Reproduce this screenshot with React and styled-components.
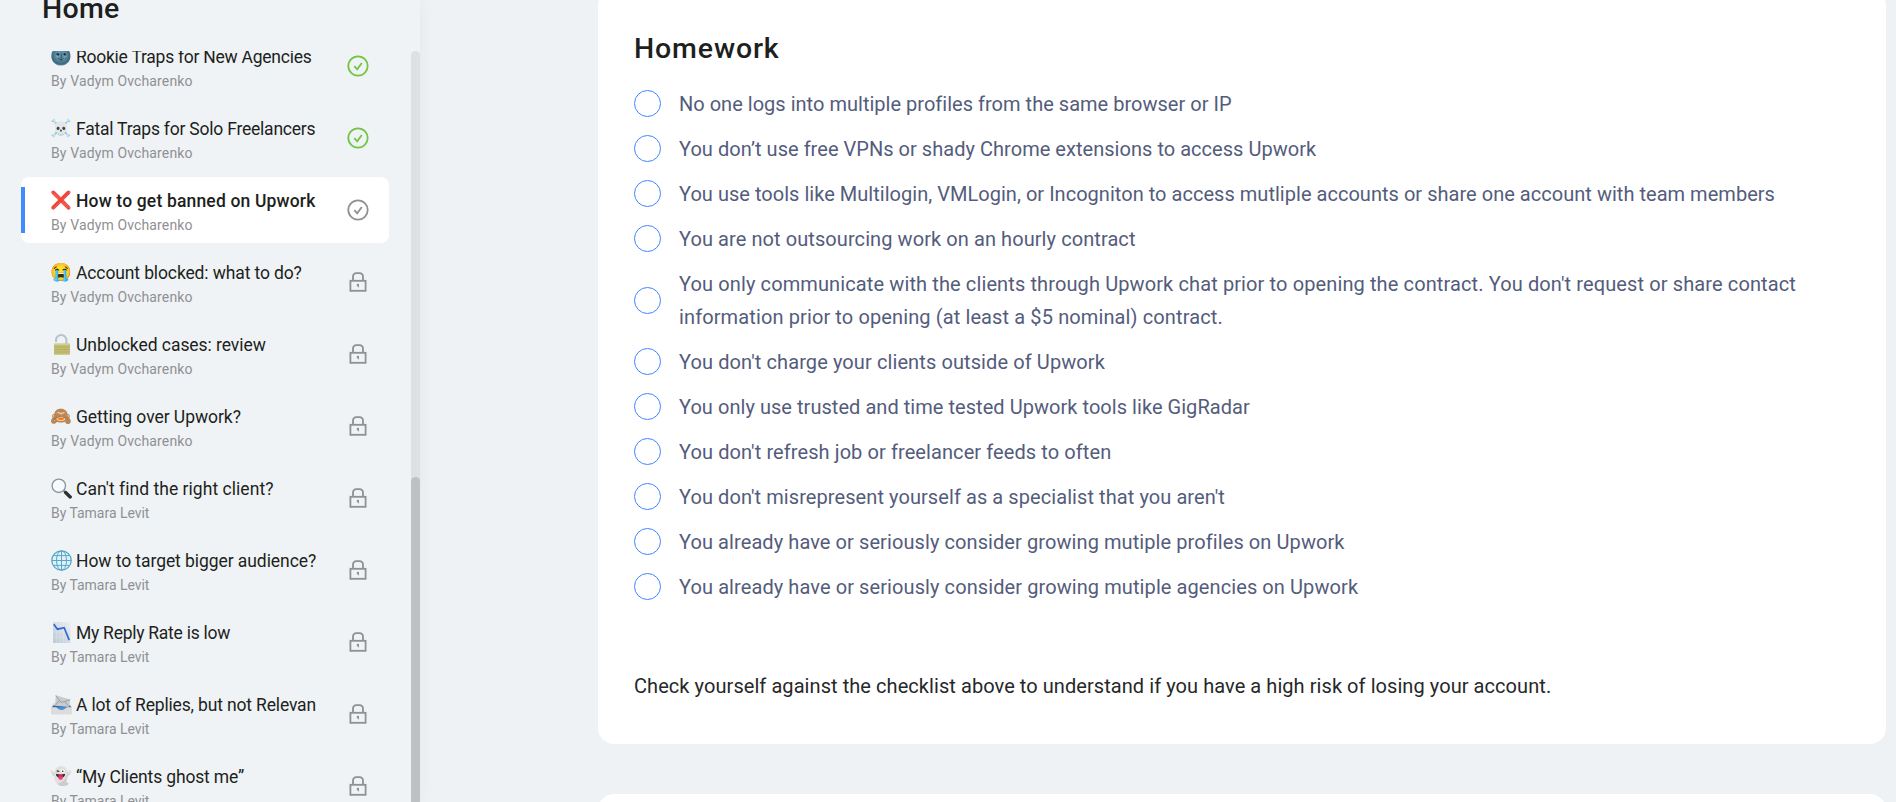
import React, { useState } from 'react'
import styled, { createGlobalStyle } from 'styled-components'

const GlobalStyle = createGlobalStyle`
  * { box-sizing: border-box; }
  html, body {
    margin: 0;
    height: 100%;
    overflow: hidden;
  }
  body {
    background: #eef2f5;
    font-family: Roboto, Inter, "Liberation Sans", sans-serif;
    color: #1d1f20;
  }
`

const Page = styled.div`
  display: flex;
  height: 802px;
  overflow: hidden;
`

const Sidebar = styled.aside`
  width: 420px;
  flex: none;
  display: flex;
  flex-direction: column;
  background: #eff3f6;
  box-shadow: 0 0 14px rgba(60, 70, 90, 0.06);
`

const SidebarTitle = styled.div`
  height: 51px;
  flex: none;
  padding-left: 42px;
  font-size: 28.5px;
  line-height: 18px;
  font-weight: 500;
  letter-spacing: 0.3px;
`

const Scroll = styled.div`
  flex: 1;
  min-height: 0;
  display: flex;
  overflow: hidden;
`

const Lessons = styled.div`
  width: 411px;
  flex: none;
  margin-top: -18px;
  padding: 0 22px 0 21px;
  display: flex;
  flex-direction: column;
  gap: 6px;
`

const Track = styled.div`
  width: 9px;
  flex: none;
  padding-top: 426px;
  border-radius: 5px 5px 0 0;
  background: #dfe0e3;
`

const Thumb = styled.div`
  height: 400px;
  border-radius: 5px;
  background: #bfc0c3;
`

const Lesson = styled.div`
  height: 66px;
  flex: none;
  display: flex;
  align-items: center;
  padding-right: 20px;
  border-radius: 8px;
  background: ${(p) => (p.$active ? '#fff' : 'transparent')};
`

const Marker = styled.div`
  width: 4px;
  height: 46px;
  flex: none;
  margin-right: 26px;
  background: ${(p) => (p.$active ? '#3f8cff' : 'transparent')};
`

const LessonText = styled.div`
  flex: 1;
  min-width: 0;
  padding-top: 5px;
  white-space: nowrap;
`

const LessonTitle = styled.div`
  display: flex;
  align-items: center;
  gap: 4px;
  font-size: 17.5px;
  line-height: 24px;
  font-weight: ${(p) => (p.$active ? 500 : 400)};
  letter-spacing: ${(p) => p.$ls}px;
`

const Author = styled.div`
  font-size: 14px;
  line-height: 24px;
  color: #8f9092;
  letter-spacing: ${(p) => p.$ls}px;
`

const Emoji = styled.span`
  width: 21px;
  height: 21px;
  flex: none;
  display: flex;
  align-items: center;
  justify-content: center;
  font-family: "Noto Color Emoji", sans-serif;
  font-size: 17.5px;
  line-height: 21px;
  letter-spacing: 0;
`

const Status = styled.span`
  width: 22px;
  height: 24px;
  flex: none;
  display: flex;
  align-items: center;
  justify-content: center;
  color: ${(p) => (p.$done ? '#73c541' : '#8f9092')};
`

const Main = styled.main`
  flex: 1;
  min-width: 0;
  display: flex;
  flex-direction: column;
  gap: 50px;
  margin-top: -10px;
  padding: 0 10px 0 178px;
`

const Card = styled.section`
  height: 754px;
  flex: none;
  padding: 40px 36px;
  border-radius: 16px;
  background: #fff;
`

const Heading = styled.h2`
  margin: 0 0 19px;
  font-size: 28.5px;
  line-height: 38px;
  font-weight: 500;
  letter-spacing: 0.85px;
`

const Checklist = styled.div`
  display: flex;
  flex-direction: column;
  gap: 12px;
`

const Task = styled.label`
  display: flex;
  align-items: center;
  gap: 18px;
  font-size: 20px;
  line-height: 33px;
  color: #545c7c;
  letter-spacing: ${(p) => p.$ls}px;
  cursor: pointer;
`

const TaskText = styled.span`
  margin: 1px 0 -1px;
`

const Radio = styled.span`
  width: 27px;
  height: 27px;
  flex: none;
  border: 1px solid #3f85ff;
  border-radius: 50%;
  background: ${(p) => (p.$checked ? '#3f85ff' : 'transparent')};
`

const Note = styled.p`
  margin: 67px 0 0;
  font-size: 20px;
  line-height: 33px;
  letter-spacing: 0.065px;
  color: #262829;
`

const CheckIcon = () => (
  <svg width="22" height="22" viewBox="0 0 22 22" fill="none" stroke="currentColor" strokeWidth="1.8">
    <circle cx="11" cy="11" r="9.7" />
    <path d="M7.3 11.2l2.9 3.2 4.6-6.4" />
  </svg>
)

const LockIcon = () => (
  <svg width="18" height="20" viewBox="0 0 18 20" fill="none" stroke="currentColor" strokeWidth="1.8">
    <rect x="1.4" y="8.8" width="15.2" height="10" />
    <path d="M4 8.6V4.4A3.3 3.3 0 0 1 7.3 1.1h3.4A3.3 3.3 0 0 1 14 4.4v4.2" />
    <circle cx="8.9" cy="13" r="1.2" fill="currentColor" stroke="none" />
    <path d="M9.4 13v2.2" strokeWidth="1.2" />
  </svg>
)

const OpenLock = () => (
  <svg width="21" height="21" viewBox="0 0 21 21" fill="none">
    <path d="M5 8V6.2a5 5 0 0 1 10.4 0V10" stroke="#b4c3cf" strokeWidth="2" />
    <rect x="3" y="9.5" width="16" height="11.3" rx="1" fill="#c3bd73" />
    <path d="M3.5 13h15M3.5 15.5h15M3.5 18h15" stroke="#b0aa60" strokeWidth=".7" />
    <path d="M3.5 10.3h15" stroke="#d9d59c" />
  </svg>
)

const Magnifier = () => (
  <svg width="21" height="21" viewBox="0 0 21 21" fill="none">
    <path d="M12.6 12.6l2.4 2.2" stroke="#8a8f94" strokeWidth="2" />
    <path d="M14.6 14.6l4.6 4.3" stroke="#2d3033" strokeWidth="3.4" strokeLinecap="round" />
    <circle cx="7.8" cy="7.8" r="6.7" fill="#f6fafc" stroke="#8b949c" strokeWidth="1.3" />
    <path d="M3.8 7.6a4 4 0 0 1 3.6-3.8" stroke="#fff" strokeWidth="1.4" />
  </svg>
)

const Globe = () => (
  <svg width="21" height="21" viewBox="0 0 21 21" fill="none" stroke="#58a6c8" strokeWidth="1">
    <circle cx="10.5" cy="10.5" r="9.7" fill="#dff2fa" strokeWidth="1.3" />
    <ellipse cx="10.5" cy="10.5" rx="5" ry="9.7" />
    <path d="M10.5 .8v19.4M.8 10.5h19.4M2.4 5.6h16.2M2.4 15.4h16.2" />
  </svg>
)

const Chart = () => (
  <svg width="21" height="21" viewBox="0 0 21 21" fill="none">
    <defs>
      <linearGradient id="paper" x1="1" y1="0" x2="0" y2="1">
        <stop offset="0" stopColor="#e9eef3" />
        <stop offset="1" stopColor="#bcc8d6" />
      </linearGradient>
    </defs>
    <rect x="2" y="0" width="17.5" height="21" fill="url(#paper)" />
    <path d="M5.5 0v21M9 0v21M12.5 0v21M16 0v21M2 5h17.5M2 10h17.5M2 15h17.5" stroke="#fff" strokeOpacity=".35" strokeWidth=".6" />
    <path d="M2.8 2.2l3.6 5 6.8-1.5 5 12.4" stroke="#3467cf" strokeWidth="1.7" />
  </svg>
)

const Tray = () => (
  <svg width="21" height="21" viewBox="0 0 21 21" fill="none">
    <path d="M2.5 9h16l2.3 4v6.8H.2V13z" fill="#dcdcda" />
    <path d="M2.2 11.5h16.8l1.4 2.3H.8z" fill="#2966ad" />
    <path d="M4.8 1.2l14.4 4.4-1.2 7.4-14-1.3z" fill="#c9cbcc" />
    <path d="M4.8 1.4l5.3 7.1 9-2.8M4 11.6l4.3-5.1M18 12.8l-4.4-5.4" stroke="#929799" strokeWidth=".8" />
    <path d="M.2 13.3h5.2c.8 4 9.4 4 10.2 0h5.2v6c0 .6-.4 1.1-1 1.1H1.2c-.6 0-1-.5-1-1.1z" fill="#dcdcda" />
    <path d="M6 13.6c1.2 3.1 7.8 3.1 9 0z" fill="#4291e2" />
  </svg>
)

const lessons = [
  { icon: '🌚', title: 'Rookie Traps for New Agencies', by: 'v', ls: -0.25, status: 'done' },
  { icon: '☠️', title: 'Fatal Traps for Solo Freelancers', by: 'v', ls: -0.22, status: 'done' },
  { icon: '❌', title: 'How to get banned on Upwork', by: 'v', ls: 0.17, status: 'current' },
  { icon: '😭', title: 'Account blocked: what to do?', by: 'v', ls: -0.12 },
  { icon: <OpenLock />, title: 'Unblocked cases: review', by: 'v', ls: -0.06 },
  { icon: '🙈', title: 'Getting over Upwork?', by: 'v', ls: -0.05 },
  { icon: <Magnifier />, title: "Can't find the right client?", by: 't', ls: 0.04 },
  { icon: <Globe />, title: 'How to target bigger audience?', by: 't', ls: -0.07 },
  { icon: <Chart />, title: 'My Reply Rate is low', by: 't', ls: -0.26 },
  { icon: <Tray />, title: 'A lot of Replies, but not Relevan', by: 't', ls: -0.16 },
  { icon: '👻', title: '“My Clients ghost me”', by: 't', ls: -0.15 },
]

const authors = {
  v: { name: 'Vadym Ovcharenko', ls: 0.13 },
  t: { name: 'Tamara Levit', ls: -0.03 },
}

const tasks = [
  { text: 'No one logs into multiple profiles from the same browser or IP', ls: 0.02 },
  { text: 'You don’t use free VPNs or shady Chrome extensions to access Upwork', ls: 0.035 },
  { text: 'You use tools like Multilogin, VMLogin, or Incogniton to access mutliple accounts or share one account with team members', ls: 0.03 },
  { text: 'You are not outsourcing work on an hourly contract', ls: 0.08 },
  { text: "You only communicate with the clients through Upwork chat prior to opening the contract. You don't request or share contact information prior to opening (at least a $5 nominal) contract.", ls: 0.115 },
  { text: "You don't charge your clients outside of Upwork", ls: 0.1 },
  { text: 'You only use trusted and time tested Upwork tools like GigRadar', ls: 0.045 },
  { text: "You don't refresh job or freelancer feeds to often", ls: 0.09 },
  { text: "You don't misrepresent yourself as a specialist that you aren't", ls: 0.075 },
  { text: 'You already have or seriously consider growing mutiple profiles on Upwork', ls: 0.085 },
  { text: 'You already have or seriously consider growing mutiple agencies on Upwork', ls: 0.09 },
]

const App = () => {
  const [checked, setChecked] = useState([])

  const toggle = (i) => {
    setChecked(checked.includes(i) ? checked.filter((c) => c !== i) : [...checked, i])
  }

  return (
    <Page>
      <GlobalStyle />
      <Sidebar>
        <SidebarTitle>Home</SidebarTitle>
        <Scroll>
          <Lessons>
            {lessons.map(({ icon, title, by, ls, status }) => (
              <Lesson key={title} $active={status === 'current'}>
                <Marker $active={status === 'current'} />
                <LessonText>
                  <LessonTitle $active={status === 'current'} $ls={ls}>
                    <Emoji>{icon}</Emoji>
                    <span>{title}</span>
                  </LessonTitle>
                  <Author $ls={authors[by].ls}>By {authors[by].name}</Author>
                </LessonText>
                <Status $done={status === 'done'}>{status ? <CheckIcon /> : <LockIcon />}</Status>
              </Lesson>
            ))}
          </Lessons>
          <Track>
            <Thumb />
          </Track>
        </Scroll>
      </Sidebar>
      <Main>
        <Card>
          <Heading>Homework</Heading>
          <Checklist>
            {tasks.map((task, i) => (
              <Task key={task.text} $ls={task.ls} onClick={() => toggle(i)}>
                <Radio $checked={checked.includes(i)} />
                <TaskText>{task.text}</TaskText>
              </Task>
            ))}
          </Checklist>
          <Note>Check yourself against the checklist above to understand if you have a high risk of losing your account.</Note>
        </Card>
        <Card />
      </Main>
    </Page>
  )
}

export default App
